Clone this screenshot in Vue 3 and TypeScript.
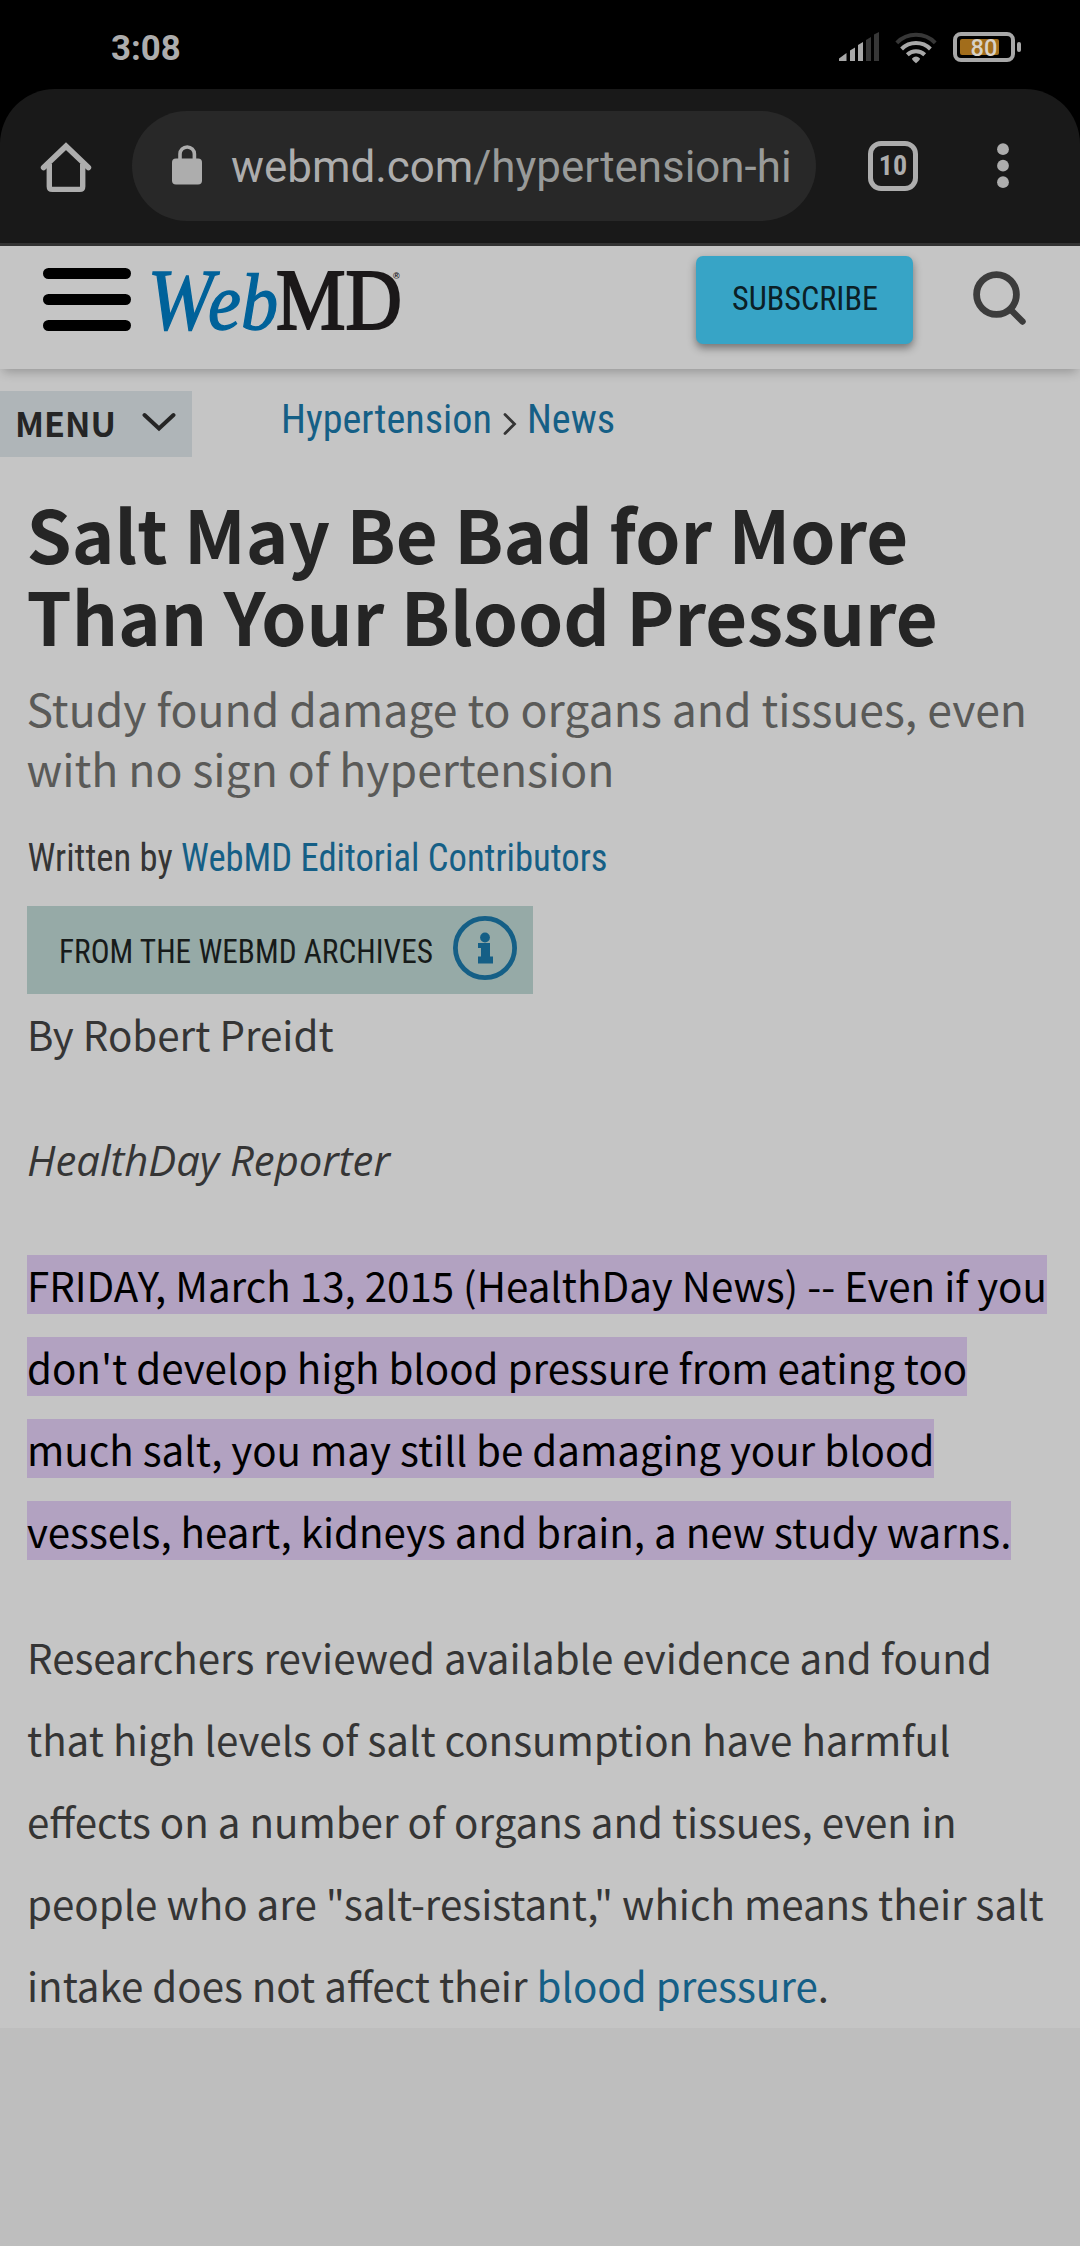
<script setup lang="ts">
interface Bar {
  points: string
  active: boolean
}

const time = '3:08'
const batteryLevel = 80
const openTabs = 10

const signalBars: Bar[] = [
  { points: '0,26.5 7.5,21 7.5,29 0,29', active: true },
  { points: '11,18.5 16,15.5 16,29 11,29', active: true },
  { points: '19,13 24,10 24,29 19,29', active: true },
  { points: '27,8 32,5 32,29 27,29', active: false },
  { points: '35,2.5 40,0 40,29 35,29', active: false },
]
</script>

<template>
  <div class="screen">
    <div class="status">
      <span class="time">{{ time }}</span>
      <div class="indicators">
        <svg class="signal" width="40" height="30" viewBox="0 0 40 30">
          <polygon
            v-for="bar in signalBars"
            :key="bar.points"
            :points="bar.points"
            :fill="bar.active ? '#a8a8a8' : '#373737'"
          />
        </svg>
        <svg class="wifi" width="42" height="32" viewBox="0 0 42 32" fill="none">
          <path d="M1.8 10.8 A27 27 0 0 1 40.2 10.8" stroke="#373737" stroke-width="4" />
          <path d="M6.6 17 A20.5 20.5 0 0 1 35.4 17" stroke="#a8a8a8" stroke-width="4" />
          <path d="M12.3 22.8 A12.6 12.6 0 0 1 29.7 22.8" stroke="#a8a8a8" stroke-width="4" />
          <path d="M17 26.6 Q21 22.4 25 26.6 Q25 28.5 21 31.2 Q17 28.5 17 26.6Z" fill="#a8a8a8" />
        </svg>
        <svg class="battery" width="69" height="30" viewBox="0 0 69 30">
          <rect x="2" y="2" width="58" height="26" rx="6" fill="none" stroke="#a8a8a8" stroke-width="4" />
          <rect x="7" y="7" width="39" height="16" rx="2" fill="#a26d1b" />
          <text class="level" x="31" y="24" text-anchor="middle">{{ batteryLevel }}</text>
          <rect x="64" y="10" width="4" height="10" rx="2" fill="#a8a8a8" />
        </svg>
      </div>
    </div>

    <div class="browser-wrap">
      <div class="browser">
        <svg class="home" width="52" height="52" viewBox="0 0 52 52" fill="none" stroke="#adadad">
          <path d="M3.6 26.6 L26 5.2 L48.4 26.6" stroke-width="5.6" stroke-linejoin="miter" stroke-linecap="round" />
          <path d="M9.3 23 V45.5 Q9.3 48.4 12.3 48.4 H39.7 Q42.7 48.4 42.7 45.5 V23" stroke-width="5.4" />
        </svg>
        <div class="address">
          <svg class="lock" width="30" height="40" viewBox="0 0 30 40">
            <rect x="0" y="13.5" width="30" height="26" rx="4" fill="#adadad" />
            <path d="M8 15 V9 A7.2 7 0 0 1 22.4 9 V15" fill="none" stroke="#adadad" stroke-width="3.6" />
          </svg>
          <span class="url"><span class="host">webmd.com</span>/hypertension-hi</span>
        </div>
        <div class="tabs"><span>{{ openTabs }}</span></div>
        <svg class="dots" width="12" height="46" viewBox="0 0 12 46" fill="#adadad">
          <circle cx="6" cy="6.2" r="5.9" />
          <circle cx="6" cy="22.7" r="5.9" />
          <circle cx="6" cy="39.2" r="5.9" />
        </svg>
      </div>
    </div>

    <header class="site">
      <svg class="burger" width="88" height="63" viewBox="0 0 88 63">
        <rect width="88" height="11" rx="5.5" />
        <rect y="26" width="88" height="11" rx="5.5" />
        <rect y="52" width="88" height="11" rx="5.5" />
      </svg>
      <svg class="logo" width="276" height="110" viewBox="0 0 276 110">
        <text class="web" x="8.5" y="80" textLength="66" lengthAdjust="spacingAndGlyphs">W</text>
        <text class="web eb" x="69" y="80" textLength="70" lengthAdjust="spacingAndGlyphs">eb</text>
        <text class="md" x="137" y="80" textLength="126" lengthAdjust="spacingAndGlyphs">MD</text>
        <text class="reg" x="254" y="30">®</text>
      </svg>
      <button class="subscribe" type="button">
        <svg width="160" height="60" viewBox="0 0 160 60">
          <text x="7" y="42" textLength="146" lengthAdjust="spacingAndGlyphs">SUBSCRIBE</text>
        </svg>
      </button>
      <svg class="search" width="56" height="56" viewBox="0 0 56 56" fill="none" stroke="#3c3c3c">
        <circle cx="23.5" cy="23.5" r="19.9" stroke-width="6.8" />
        <path d="M38 39 L49.5 50.5" stroke-width="6.4" stroke-linecap="round" />
      </svg>
    </header>

    <main class="page">
      <nav class="crumbs">
        <div class="menu">
          <span>MENU</span>
          <svg width="34" height="20" viewBox="0 0 34 20" fill="none" stroke="#252525" stroke-width="4">
            <path d="M2.5 3 L17 16.5 L31.5 3" stroke-linecap="round" />
          </svg>
        </div>
        <div class="trail">
          <a>Hypertension</a>
          <svg width="14" height="24" viewBox="0 0 14 24" fill="none" stroke="#353535" stroke-width="2.8">
            <path d="M2 2.5 L11.5 12 L2 21.5" stroke-linecap="round" />
          </svg>
          <a>News</a>
        </div>
      </nav>

      <article>
        <h1>Salt May Be Bad for More<br />Than Your Blood Pressure</h1>
        <h2>Study found damage to organs and tissues, even<br />with no sign of hypertension</h2>
        <svg class="byline" width="600" height="50" viewBox="0 0 600 50">
          <text x="0.5" y="38" textLength="580" lengthAdjust="spacingAndGlyphs">Written by <tspan class="link">WebMD Editorial Contributors</tspan></text>
        </svg>
        <div class="archive">
          <svg width="376" height="60" viewBox="0 0 376 60">
            <text x="0" y="43" textLength="374" lengthAdjust="spacingAndGlyphs">FROM THE WEBMD ARCHIVES</text>
          </svg>
          <svg class="info" width="64" height="64" viewBox="0 0 64 64">
            <circle cx="32" cy="32" r="29.6" fill="none" stroke="#155f86" stroke-width="4.8" />
            <circle cx="32" cy="21.5" r="4.9" fill="#155f86" />
            <path d="M25 27 H37 V40.5 H40 V47.5 H25 V40.5 H28 V32 H25Z" fill="#155f86" />
          </svg>
        </div>
        <p class="author">By Robert Preidt</p>
        <p class="source">HealthDay Reporter</p>
        <p class="lead">
          <mark>FRIDAY, March 13, 2015 (HealthDay News) -- Even if you<br />don't develop high blood pressure from eating too<br />much salt, you may still be damaging your blood<br />vessels, heart, kidneys and brain, a new study warns.</mark>
        </p>
        <p>
          Researchers reviewed available evidence and found<br />that high levels of salt consumption have harmful<br />effects on a number of organs and tissues, even in<br />people who are "salt-resistant," which means their salt<br />intake does not affect their <a>blood pressure</a>.
        </p>
      </article>
    </main>
  </div>
</template>

<style>
body {
  margin: 0;
  background: #bebebe;
}
</style>

<style scoped>
.screen {
  width: 1080px;
  height: 2246px;
  display: flex;
  flex-direction: column;
  overflow: hidden;
  background: #bebebe;
  font-family: "Noto Sans CJK SC", "Noto Sans", sans-serif;
  color: #353535;
}
.status {
  height: 89px;
  flex: none;
  display: flex;
  justify-content: space-between;
  background: #000;
}
.time {
  margin: 27px 0 0 111px;
  font: 700 34.8px/42px Roboto, sans-serif;
  color: #adadad;
}
.indicators {
  display: flex;
  align-items: flex-start;
  margin: 32px 58px 0 0;
}
.wifi {
  margin-left: 16px;
}
.battery {
  margin-left: 16px;
}
.level {
  font: 500 23.6px Roboto, sans-serif;
  fill: #d8d2c8;
}
.browser-wrap {
  flex: none;
  background: #000;
}
.browser {
  height: 154px;
  box-sizing: border-box;
  border-radius: 55px 55px 0 0;
  background: #191919;
  display: flex;
  align-items: flex-start;
  padding-top: 22px;
}
.home {
  margin: 30px 0 0 40px;
}
.address {
  width: 684px;
  height: 110px;
  margin-left: 40px;
  border-radius: 55px;
  background: #282828;
  display: flex;
  align-items: flex-start;
}
.lock {
  margin: 34px 0 0 40px;
}
.url {
  margin: 30px 0 0 29px;
  font: 400 43.9px/52px Roboto, sans-serif;
  color: #989a99;
  white-space: nowrap;
}
.host {
  color: #adadad;
}
.tabs {
  width: 50px;
  height: 50px;
  box-sizing: border-box;
  margin: 30px 0 0 52px;
  border: 5.5px solid #adadad;
  border-radius: 13px;
  display: flex;
  justify-content: center;
  align-items: center;
  font: 700 28px/30px "Roboto Condensed", Roboto, sans-serif;
  color: #adadad;
}
.dots {
  margin: 32px 0 0 79px;
}
.site {
  position: relative;
  height: 126px;
  flex: none;
  box-sizing: border-box;
  border-top: 3px solid #333;
  background: #c5c5c5;
  box-shadow: 0 6px 10px -3px rgba(0, 0, 0, 0.24);
  display: flex;
  align-items: flex-start;
}
.burger {
  margin: 22px 0 0 43px;
}
.logo {
  margin: 3px 0 0 8px;
}
.web {
  font: italic 400 87px "Liberation Serif", serif;
  fill: #00629a;
  stroke: #00629a;
  stroke-width: 1.4px;
}
.eb {
  font-size: 81px;
}
.md {
  font: 400 87px "Liberation Serif", serif;
  fill: #1b1819;
  stroke: #1b1819;
  stroke-width: 2.2px;
}
.reg {
  font: 700 9px "Liberation Sans", sans-serif;
  fill: #1b1819;
}
.subscribe {
  width: 217px;
  height: 88px;
  margin: 10px 0 0 281px;
  padding: 0;
  border: 0;
  border-radius: 7px;
  background: #37a4c6;
  box-shadow: 0 4px 8px rgba(0, 0, 0, 0.42);
  display: flex;
  justify-content: center;
  align-items: center;
}
.subscribe svg {
  margin-bottom: 4px;
}
.subscribe text {
  font: 400 34px "Roboto Condensed", Roboto, sans-serif;
  fill: #0b2026;
}
.search {
  margin: 25px 0 0 60px;
}
.page {
  height: 1659px;
  flex: none;
  background: #c5c5c5;
}
.crumbs {
  display: flex;
  align-items: flex-start;
  padding-top: 22px;
}
.menu {
  width: 192px;
  height: 66px;
  box-sizing: border-box;
  padding: 0 16px 0 15px;
  display: flex;
  justify-content: space-between;
  align-items: center;
  background: #afb5b8;
  font-weight: 700;
  font-size: 34px;
  line-height: 50px;
  color: #252525;
}
.menu span {
  margin-bottom: 2px;
}
.menu svg {
  margin-top: -4px;
}
.trail {
  display: flex;
  align-items: center;
  margin: 5px 0 0 89px;
  font: 400 40.2px/48px "Roboto Condensed", Roboto, sans-serif;
}
.trail svg {
  margin: 8px 10px 0 11px;
}
a,
.link {
  color: #155f86;
  fill: #155f86;
}
article {
  padding: 0 27px;
}
h1 {
  margin: 34.5px 0 0 -0.5px;
  font-size: 72.35px;
  line-height: 82px;
  font-weight: 700;
  color: #252525;
  white-space: nowrap;
}
h2 {
  margin: 22.5px 0 0 -0.5px;
  font-size: 44.55px;
  line-height: 60px;
  font-weight: 400;
  color: #5a5a58;
  white-space: nowrap;
}
.byline {
  display: block;
  margin-top: 34.5px;
}
.byline text {
  font: 400 39px "Roboto Condensed", Roboto, sans-serif;
  fill: #353535;
}
.archive {
  width: 506px;
  height: 88px;
  box-sizing: border-box;
  margin-top: 23px;
  padding: 0 16px 0 32px;
  display: flex;
  justify-content: space-between;
  align-items: center;
  background: #96aaa7;
}
.archive text {
  font: 400 34px "Roboto Condensed", Roboto, sans-serif;
  fill: #171b1a;
}
.info {
  margin-bottom: 3px;
}
p {
  margin: 43.5px 0 0;
  font-size: 40.27px;
  line-height: 82px;
  white-space: nowrap;
}
.author {
  margin-top: 0;
  line-height: 80px;
}
.source {
  margin-top: 45px;
  font-family: "Open Sans", sans-serif;
  font-style: italic;
  font-size: 41.8px;
}
mark {
  background: #b2a2c1;
  color: #000;
}
</style>
